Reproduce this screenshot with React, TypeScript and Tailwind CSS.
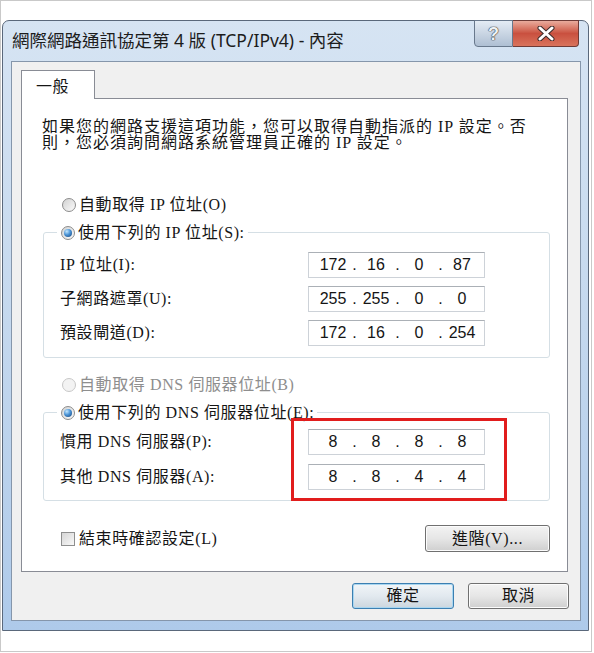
import { Fragment } from 'react';

const body = "font-['Liberation_Serif','Noto_Sans_CJK_TC',serif]";

interface RadioProps {
	checked?: boolean;
	disabled?: boolean;
}

const Radio = ({ checked, disabled }: RadioProps) => (
	<span
		className={`flex h-[14px] w-[14px] shrink-0 items-center justify-center rounded-full border ${
			disabled
				? 'border-[#c8c8c8] bg-[#f3f3f3]'
				: 'border-[#8c8c8c] bg-linear-to-br from-[#d2d2d2] to-[#fbfbfb]'
		}`}
	>
		{checked && (
			<span className="h-[8px] w-[8px] rounded-full bg-[radial-gradient(circle_at_35%_30%,#c4e8ff_0%,#4a93d6_45%,#123f74_100%)]" />
		)}
	</span>
);

const IpField = ({ parts }: { parts: string[] }) => (
	<div className="flex h-[26px] w-[177px] items-center border border-[#cdd2d8] border-t-[#abb0b6] bg-white pl-[6px] font-['Liberation_Sans',sans-serif] text-[16px] leading-[20px] tracking-normal text-[#151515]">
		{parts.map((p, i) => (
			<Fragment key={i}>
				{i > 0 && <span className="w-[7px] text-center">.</span>}
				<span className="w-[36px] text-center">{p}</span>
			</Fragment>
		))}
	</div>
);

const Row = ({ label, parts }: { label: string; parts: string[] }) => (
	<div className="flex items-center pl-[16px]">
		<span className="w-[248px] whitespace-nowrap">{label}</span>
		<IpField parts={parts} />
	</div>
);

export default function App() {
	return (
		<div className="h-[653px] w-[594px] bg-white">
			<div className="h-[652px] w-[592px] border border-[#c9c9c9] pl-[1px] pt-[19px]">
				{/* window */}
				<div className="flex h-[611px] w-[587px] flex-col rounded-t-[7px] border border-[#5a687b] bg-linear-to-b from-[#d6e4f3] via-[#c4d8ee] to-[#aecaea]">
					<div className="flex h-[40px] items-start justify-between pl-[9px]">
						<span className="pt-[8px] font-['Noto_Sans','Noto_Sans_CJK_TC',sans-serif] text-[17.5px] leading-[22px] text-[#1c1c1c]">
							網際網路通訊協定第 4 版 (TCP/IPv4) - 內容
						</span>
						<div className="-mt-[1px] mr-[9px] flex">
							<div className="flex h-[27px] w-[39px] items-center justify-center rounded-bl-[4px] border border-[#68788c] bg-linear-to-b from-[#e4ecf5] via-[#c9d5e3] to-[#aebfd3]">
								<span className="font-['Liberation_Sans',sans-serif] text-[18px] font-bold leading-none text-[#eef2f6] [text-shadow:0_0_1px_#3a3a3a,0_0_1px_#3a3a3a,0_0_1px_#3a3a3a]">
									?
								</span>
							</div>
							<div className="flex h-[27px] w-[66px] items-center justify-center rounded-br-[4px] border border-l-0 border-[#6e3a36] bg-linear-to-b from-[#e9ab9d] via-[#c9503f] to-[#d9735c]">
								<svg width="20" height="15" viewBox="0 0 20 15">
									<path d="M4 2 L16 13 M16 2 L4 13" stroke="#3a2a2a" strokeWidth="5" strokeLinecap="round" />
									<path d="M4 2 L16 13 M16 2 L4 13" stroke="#ffffff" strokeWidth="3" strokeLinecap="round" />
								</svg>
							</div>
						</div>
					</div>

					{/* client area */}
					<div className={`ml-[8px] flex h-[560px] w-[570px] flex-col border border-[#8596ab] bg-[#f0f0f0] pl-[9px] pt-[8px] ${body} text-[16px] tracking-[0.6px] text-[#151515]`}>
						<div className="relative z-10 -mb-[1px] flex h-[29px] w-[74px] items-center border border-b-0 border-[#898c95] bg-white pl-[14px]">
							<span className="font-['Noto_Sans_CJK_TC',sans-serif] leading-[20px]">一般</span>
						</div>

						{/* tab page */}
						<div className="relative flex h-[474px] w-[547px] flex-col border border-[#898c95] bg-white pt-[20px]">
							<p className="px-[20px] leading-[16px] tracking-[1px] whitespace-nowrap">
								如果您的網路支援這項功能，您可以取得自動指派的 IP 設定。否
								<br />
								則，您必須詢問網路系統管理員正確的 IP 設定。
							</p>

							<div className="mt-[44px] flex h-[20px] items-center gap-[3px] pl-[40px]">
								<Radio />
								<span>自動取得 IP 位址(O)</span>
							</div>

							<div className="ml-[21px] mt-[17px] flex w-[507px] flex-col gap-[8px] rounded-[3px] border border-[#d5dfe5] pb-[11px]">
								<div className="-mt-[10px] mb-[1px] ml-[13px] flex h-[20px] w-fit items-center gap-[3px] bg-white pl-[4px] pr-[3px]">
									<Radio checked />
									<span>使用下列的 IP 位址(S):</span>
								</div>
								<Row label="IP 位址(I):" parts={['172', '16', '0', '87']} />
								<Row label="子網路遮罩(U):" parts={['255', '255', '0', '0']} />
								<Row label="預設閘道(D):" parts={['172', '16', '0', '254']} />
							</div>

							<div className="mt-[17px] flex h-[20px] items-center gap-[3px] pl-[40px] text-[#8e8e8e]">
								<Radio disabled />
								<span>自動取得 DNS 伺服器位址(B)</span>
							</div>

							<div className="ml-[21px] mt-[17px] flex w-[507px] flex-col gap-[9px] rounded-[3px] border border-[#d5dfe5] pb-[10px]">
								<div className="-mt-[10px] -mb-[3px] ml-[13px] flex h-[20px] w-fit items-center gap-[3px] bg-white pl-[4px] pr-[3px]">
									<Radio checked />
									<span>使用下列的 DNS 伺服器位址(E):</span>
								</div>
								<Row label="慣用 DNS 伺服器(P):" parts={['8', '8', '8', '8']} />
								<Row label="其他 DNS 伺服器(A):" parts={['8', '8', '4', '4']} />
							</div>

							<div className="ml-[21px] mt-[24px] flex w-[507px] items-center justify-between pl-[18px]">
								<div className="flex items-center gap-[4px]">
									<span className="h-[14px] w-[14px] border border-[#8e8f8f] bg-linear-to-br from-[#d6d6d6] to-[#f9f9f9]" />
									<span>結束時確認設定(L)</span>
								</div>
								<button className="flex h-[27px] w-[125px] items-center justify-center rounded-[3px] border border-[#707070] bg-linear-to-b from-[#f3f3f3] via-[#e6e6e6] to-[#cfcfcf] shadow-[inset_0_0_0_1px_#fcfcfc]">
									進階(V)...
								</button>
							</div>

							{/* highlight annotation */}
							<div className="absolute left-[269px] top-[319px] h-[83px] w-[216px] border-[3px] border-[#e11d1d]" />
						</div>

						<div className="mt-[11px] flex justify-end gap-[14px] pr-[11px]">
							<button className="flex h-[26px] w-[102px] items-center justify-center rounded-[3px] border border-[#3c7fb1] bg-linear-to-b from-[#f1f5f8] via-[#e2e9ef] to-[#ccd6de] shadow-[inset_0_0_0_1px_#a9d6f0]">
								確定
							</button>
							<button className="flex h-[26px] w-[101px] items-center justify-center rounded-[3px] border border-[#707070] bg-linear-to-b from-[#f3f3f3] via-[#e6e6e6] to-[#cfcfcf] shadow-[inset_0_0_0_1px_#fcfcfc]">
								取消
							</button>
						</div>
					</div>
				</div>
			</div>
		</div>
	);
}
